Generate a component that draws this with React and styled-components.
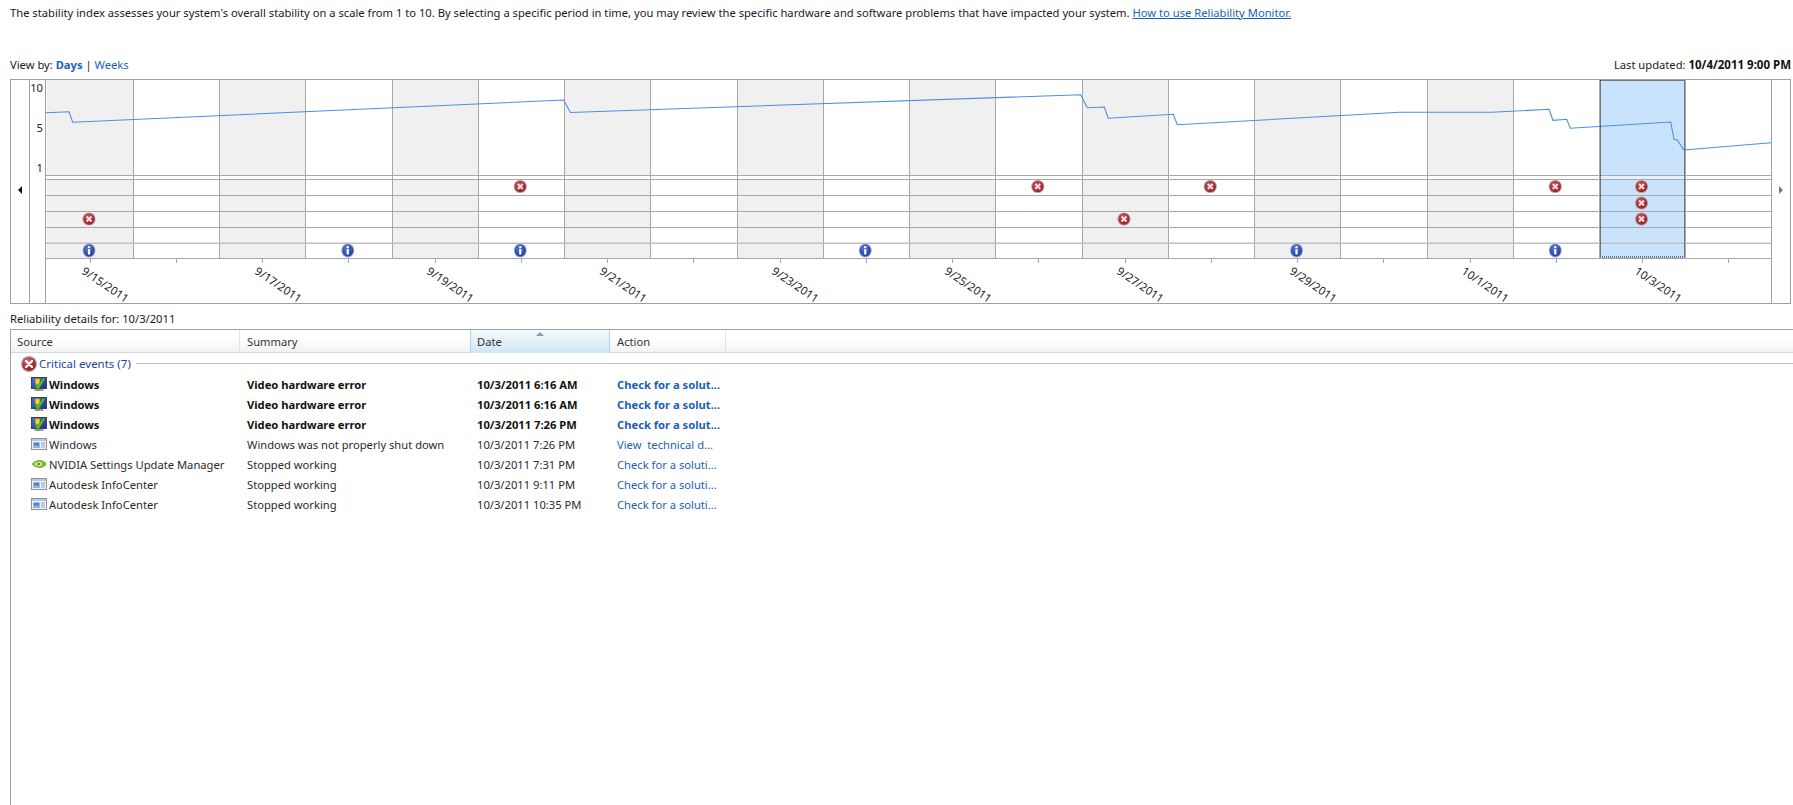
import React from "react";
import styled, { createGlobalStyle } from "styled-components";

const Global = createGlobalStyle`
  html, body { margin: 0; padding: 0; background: #fff; }
  body {
    font-family: "Noto Sans", "Open Sans", "Liberation Sans", sans-serif;
    font-size: 11.2px;
    color: #1a1a1a;
    overflow: hidden;
  }
`;

const Page = styled.div`
  width: 1793px;
  height: 805px;
  display: flex;
  flex-direction: column;
  overflow: hidden;
`;

const Top = styled.div`
  padding: 5px 2px 0 10px;
  display: flex;
  flex-direction: column;
`;

const Line = styled.div`
  line-height: 16px;
  height: 16px;
  white-space: nowrap;
`;

const Link = styled.a`
  color: #1a5fb4;
  text-decoration: ${(p) => (p.$underline ? "underline" : "none")};
  font-weight: ${(p) => (p.$bold ? 700 : 400)};
`;

const ViewBar = styled.div`
  margin-top: 36px;
  height: 16px;
  line-height: 16px;
  display: flex;
  justify-content: space-between;
  white-space: nowrap;
`;

const Strong = styled.b`
  font-weight: 700;
  color: #111;
  font-size: 11.5px;
`;

const ChartPanel = styled.div`
  margin-top: 6px;
  height: 223px;
  border: 1px solid #a0a0a0;
  display: flex;
`;

const ArrowColumn = styled.div`
  width: 18px;
  ${(p) => (p.$side === "left" ? "border-right" : "border-left")}: 1px solid #a0a0a0;
  display: flex;
  justify-content: center;
  padding-top: 106px;
`;

const Arrow = styled.span`
  width: 0;
  height: 0;
  border-top: 4px solid transparent;
  border-bottom: 4px solid transparent;
  ${(p) =>
    p.$dir === "left"
      ? "border-right: 4px solid #111;"
      : "border-left: 4px solid #777;"}
`;

const Axis = styled.div`
  width: 13px;
  padding-right: 2px;
  border-right: 1px solid #a0a0a0;
  display: flex;
  flex-direction: column;
  align-items: flex-end;
  gap: 24px;
`;

const AxisLabel = styled.span`
  height: 16px;
  line-height: 16px;
  color: #222;
`;

const PlotColumn = styled.div`
  width: 1725px;
  flex: none;
  display: flex;
  flex-direction: column;
`;

const ChartSvg = styled.svg`
  display: block;
  width: 1725px;
  height: 183px;
  flex: none;
`;

const DateAxis = styled.div`
  height: 40px;
  display: grid;
  grid-template-columns: repeat(10, 1fr);
`;

const DateCell = styled.div`
  position: relative;
  overflow: visible;
`;

const DateLabel = styled.span`
  position: absolute;
  left: 41px;
  top: 1px;
  line-height: 14px;
  white-space: nowrap;
  color: #222;
  font-size: 11.25px;
  transform: rotate(34deg);
  transform-origin: 0 0;
`;

const DetailsLabel = styled(Line)`
  margin-top: 7px;
`;

const Table = styled.div`
  margin: 2px 0 0 10px;
  flex: 1;
  border-top: 1px solid #a0a0a0;
  border-left: 1px solid #a0a0a0;
`;

const columns = "229px 231px 139px 116px 1fr";

const HeaderRow = styled.div`
  display: grid;
  grid-template-columns: ${columns};
  height: 22px;
  border-bottom: 1px solid #d5d6de;
  background: linear-gradient(#fff 0%, #fff 40%, #f1f2f4 100%);
`;

const HeaderCell = styled.div`
  position: relative;
  padding-left: ${(p) => p.$pad}px;
  line-height: 23px;
  color: #333;
  border-right: 1px solid ${(p) => (p.$sorted ? "#a9d3e8" : "#e2e3e7")};
  ${(p) =>
    p.$sorted &&
    `background: linear-gradient(#f4fafd 0%, #e6f2f9 45%, #cfe6f3 100%);
     border-left: 1px solid #a9d3e8;
     margin-left: -1px;`}
`;

const HeaderFiller = styled.div``;

const SortMark = styled.span`
  position: absolute;
  top: 2px;
  left: 65px;
  width: 0;
  height: 0;
  border-left: 4px solid transparent;
  border-right: 4px solid transparent;
  border-bottom: 4px solid #8a9ba8;
`;

const Group = styled.div`
  height: 21px;
  display: flex;
  align-items: center;
  padding-left: 10px;
  gap: 2px;
`;

const GroupTitle = styled.span`
  color: #1c47a0;
  font-size: 11.5px;
`;

const GroupRule = styled.span`
  flex: 1;
  height: 1px;
  margin-left: 3px;
  background: #b9c2d4;
`;

const Row = styled.div`
  display: grid;
  grid-template-columns: ${columns};
  height: 20px;
  align-items: center;
  font-weight: ${(p) => (p.$bold ? 700 : 400)};
  color: ${(p) => (p.$bold ? "#111" : "#2a2a2a")};
`;

const SourceCell = styled.div`
  padding-left: 20px;
  display: flex;
  align-items: center;
  gap: 2px;
  white-space: nowrap;
`;

const Cell = styled.div`
  padding-left: ${(p) => p.$pad}px;
  white-space: nowrap;
`;

const ActionCell = styled(Cell)`
  color: #1a5fb4;
`;

const IconSvg = styled.svg`
  display: block;
  flex: none;
  width: 16px;
  height: 16px;
`;

/* icons */
const MonitorIcon = () => (
  <IconSvg viewBox="0 0 16 16">
    <defs>
      <linearGradient id="scr" x1="0" y1="0" x2="1" y2="1">
        <stop offset="0" stopColor="#4a70dc" />
        <stop offset="1" stopColor="#1e2f8a" />
      </linearGradient>
    </defs>
    <rect x=".5" y="1.5" width="15" height="11" fill="url(#scr)" stroke="#39415c" strokeWidth="1" />
    <rect x="3.5" y="13" width="9" height="2" fill="#9aa0aa" />
    <path d="M4.2 2.8 L8.8 2.8 L8.8 7 Q8.8 9 6.5 10 Q4.2 9 4.2 7 Z" fill="#f2d422" stroke="#a08a10" strokeWidth=".4" />
    <path d="M3.6 8.6 L6.8 14.4 L14.2 2.6 L11.4 2.6 L6.9 10 L5.8 7.8 Z" fill="#5cc030" stroke="#2e7d14" strokeWidth=".5" />
  </IconSvg>
);

const WindowIcon = () => (
  <IconSvg viewBox="0 0 16 16">
    <rect x=".5" y="2.5" width="15" height="11" fill="#eef1f6" stroke="#8b93a3" />
    <rect x="1" y="3" width="14" height="2" fill="#b9c8de" />
    <rect x="2.5" y="6.5" width="6" height="5.5" fill="#4c82c8" />
    <rect x="2.5" y="9.5" width="6" height="2.5" fill="#8db4e2" />
    <path d="M10 7h4M10 9h4M10 11h4" stroke="#9aa2b0" strokeWidth="1" />
  </IconSvg>
);

const NvidiaIcon = () => (
  <IconSvg viewBox="0 0 16 16">
    <path d="M.5 8 C3 5 6.5 3.8 9.5 4.1 C12.5 4.4 14.5 6 15.5 8 C14.5 10 12.5 11.6 9.5 11.9 C6.5 12.2 3 11 .5 8 Z" fill="#78b82a" />
    <path d="M3 8 C4.6 6.2 7.6 5.4 9.8 6.1 C12 7 11.8 9.4 9.4 10.3 C7 10.7 4.6 9.8 3 8 Z" fill="#c8e69c" />
    <path d="M5.6 8 C6.6 7.1 8.2 6.8 9 7.5 C9.6 8.2 8.8 9.2 7.6 9.3 C6.8 9.1 6.1 8.6 5.6 8 Z" fill="#5c9620" />
  </IconSvg>
);

const CriticalIcon = () => (
  <IconSvg viewBox="0 0 16 16">
    <defs>
      <radialGradient id="crit" cx=".4" cy=".3" r=".8">
        <stop offset="0" stopColor="#d86a6e" />
        <stop offset=".6" stopColor="#ab2a30" />
        <stop offset="1" stopColor="#861418" />
      </radialGradient>
    </defs>
    <circle cx="8" cy="8" r="8" fill="#aca4a6" />
    <circle cx="8" cy="8" r="6.8" fill="url(#crit)" />
    <path d="M5 5 L11 11 M11 5 L5 11" stroke="#fff" strokeWidth="2.4" strokeLinecap="round" />
  </IconSvg>
);

/* chart data, in page coordinates */
const X0 = 46.5;
const DAY = 86.25;
const TOP = 80;
const HEAD_BOTTOM = 175.5;
const BAND_BOTTOM = 179.5;
const RULES = [195.5, 211.5, 227.5];
const INFO_RULE = 243;
const PLOT_BOTTOM = 258.5;
const COUNT = 20;
const SELECTED = 18;
const colX = (i) => Math.round(X0 + DAY * i);
const colMid = (i) => X0 + DAY * (i + 0.5);
const ROW_Y = [186.5, 203, 219];
const INFO_Y = 250.5;

const ERRORS = [
  [5, 0], [11, 0], [13, 0], [17, 0], [18, 0],
  [18, 1],
  [0, 2], [12, 2], [18, 2],
];
const INFOS = [0, 3, 5, 9, 14, 17];
const DATES = ["9/15/2011", "9/17/2011", "9/19/2011", "9/21/2011", "9/23/2011", "9/25/2011", "9/27/2011", "9/29/2011", "10/1/2011", "10/3/2011"];

const TREND = [
  [46, 112.7], [69, 111.7], [72.7, 122.3], [563.5, 100], [570.5, 112.5],
  [1080.7, 94.7], [1087.3, 107.7], [1104.3, 107], [1108.3, 118.3],
  [1173.3, 114.3], [1177.3, 124.7], [1400, 112.3], [1491.7, 112.3],
  [1549, 109.3], [1553, 120.3], [1566.7, 119.3], [1570.3, 128.3],
  [1670.7, 122], [1674, 139.3], [1677.3, 140], [1683.3, 149.3], [1686.7, 149.7], [1771, 142.7],
];

const ErrorGlyph = ({ x, y }) => (
  <g transform={`translate(${x} ${y})`}>
    <circle r="6.6" fill="#c4a2a4" />
    <circle r="5.7" fill="url(#errFill)" />
    <path d="M-2.5 -2.5 L2.5 2.5 M2.5 -2.5 L-2.5 2.5" stroke="#f4e2e2" strokeWidth="2" />
  </g>
);

const InfoGlyph = ({ x, y }) => (
  <g transform={`translate(${x} ${y})`}>
    <ellipse rx="6.4" ry="7" fill="#8fa4d4" />
    <ellipse rx="5.5" ry="6.1" fill="url(#infoFill)" />
    <rect x="-1.1" y="-1.4" width="2.2" height="5.4" fill="#fff" />
    <rect x="-1.1" y="-4.4" width="2.2" height="2" fill="#fff" />
  </g>
);

const Chart = () => (
  <ChartSvg viewBox={`46 ${TOP} 1725 183`}>
    <defs>
      <radialGradient id="errFill" cx=".4" cy=".3" r=".8">
        <stop offset="0" stopColor="#c85258" />
        <stop offset="1" stopColor="#8c1c24" />
      </radialGradient>
      <radialGradient id="infoFill" cx=".4" cy=".3" r=".8">
        <stop offset="0" stopColor="#5478d0" />
        <stop offset="1" stopColor="#1c3690" />
      </radialGradient>
    </defs>
    {Array.from({ length: COUNT }, (_, i) =>
      i % 2 === 0 && i <= 16 ? (
        <rect key={i} x={colX(i)} y={TOP} width={DAY} height={PLOT_BOTTOM - TOP} fill="#f0f0f0" />
      ) : null
    )}
    <rect x={colX(SELECTED) + 1} y={TOP} width={DAY - 1} height={PLOT_BOTTOM - TOP} fill="#c9e3fc" />
    <rect x="46" y={HEAD_BOTTOM} width="1725" height={BAND_BOTTOM - HEAD_BOTTOM} fill="#fff" />
    <rect x={colX(SELECTED) + 1} y={HEAD_BOTTOM} width="85" height={BAND_BOTTOM - HEAD_BOTTOM} fill="#e6f1fd" />
    {Array.from({ length: COUNT - 1 }, (_, i) => (
      <rect key={i} x={colX(i + 1)} y={TOP} width="1" height={PLOT_BOTTOM - TOP} fill="#a8a8a8" />
    ))}
    {[HEAD_BOTTOM, BAND_BOTTOM, ...RULES, PLOT_BOTTOM].map((y) => (
      <rect key={y} x="46" y={y - 0.5} width="1725" height="1" fill="#a8a8a8" />
    ))}
    <rect x="46" y={INFO_RULE - 0.5} width="1725" height="1.5" fill="#c0c0c0" />
    {Array.from({ length: COUNT }, (_, i) => (
      <rect key={i} x={Math.round(colMid(i))} y={PLOT_BOTTOM} width="1" height="4.5" fill="#a8a8a8" />
    ))}
    <polyline
      points={TREND.map((p) => p.join(",")).join(" ")}
      fill="none"
      stroke="#4a90e2"
      strokeWidth="1.1"
    />
    <rect
      x={colX(SELECTED) + 1.5}
      y={TOP + 0.5}
      width="84"
      height={PLOT_BOTTOM - TOP - 2}
      fill="none"
      stroke="#111"
      strokeWidth="1"
      strokeDasharray="1 1"
    />
    {ERRORS.map(([c, r]) => (
      <ErrorGlyph key={`${c}-${r}`} x={colMid(c) - 0.6} y={ROW_Y[r]} />
    ))}
    {INFOS.map((c) => (
      <InfoGlyph key={c} x={colMid(c) - 0.6} y={INFO_Y} />
    ))}
  </ChartSvg>
);

const EVENTS = [
  { icon: MonitorIcon, source: "Windows", summary: "Video hardware error", date: "10/3/2011 6:16 AM", action: "Check for a solut...", bold: true },
  { icon: MonitorIcon, source: "Windows", summary: "Video hardware error", date: "10/3/2011 6:16 AM", action: "Check for a solut...", bold: true },
  { icon: MonitorIcon, source: "Windows", summary: "Video hardware error", date: "10/3/2011 7:26 PM", action: "Check for a solut...", bold: true },
  { icon: WindowIcon, source: "Windows", summary: "Windows was not properly shut down", date: "10/3/2011 7:26 PM", action: "View\u00a0 technical d..." },
  { icon: NvidiaIcon, source: "NVIDIA Settings Update Manager", summary: "Stopped working", date: "10/3/2011 7:31 PM", action: "Check for a soluti..." },
  { icon: WindowIcon, source: "Autodesk InfoCenter", summary: "Stopped working", date: "10/3/2011 9:11 PM", action: "Check for a soluti..." },
  { icon: WindowIcon, source: "Autodesk InfoCenter", summary: "Stopped working", date: "10/3/2011 10:35 PM", action: "Check for a soluti..." },
];

export default function App() {
  return (
    <Page>
      <Global />
      <Top>
        <Line>
          The stability index assesses your system's overall stability on a scale from 1 to 10. By selecting a specific period in time, you may review the specific hardware and software problems that have impacted your system.{" "}
          <Link $underline href="#">How to use Reliability Monitor.</Link>
        </Line>
        <ViewBar>
          <span>
            View by: <Link $bold href="#">Days</Link> | <Link href="#">Weeks</Link>
          </span>
          <span>
            Last updated: <Strong>10/4/2011 9:00 PM</Strong>
          </span>
        </ViewBar>
        <ChartPanel>
          <ArrowColumn $side="left"><Arrow $dir="left" /></ArrowColumn>
          <Axis>
            <AxisLabel>10</AxisLabel>
            <AxisLabel>5</AxisLabel>
            <AxisLabel>1</AxisLabel>
          </Axis>
          <PlotColumn>
            <Chart />
            <DateAxis>
              {DATES.map((d) => (
                <DateCell key={d}><DateLabel>{d}</DateLabel></DateCell>
              ))}
            </DateAxis>
          </PlotColumn>
          <ArrowColumn $side="right"><Arrow $dir="right" /></ArrowColumn>
        </ChartPanel>
        <DetailsLabel>Reliability details for: 10/3/2011</DetailsLabel>
      </Top>
      <Table>
        <HeaderRow>
          <HeaderCell $pad={6}>Source</HeaderCell>
          <HeaderCell $pad={7}>Summary</HeaderCell>
          <HeaderCell $pad={6} $sorted>Date<SortMark /></HeaderCell>
          <HeaderCell $pad={7}>Action</HeaderCell>
          <HeaderFiller />
        </HeaderRow>
        <Group>
          <CriticalIcon />
          <GroupTitle>Critical events (7)</GroupTitle>
          <GroupRule />
        </Group>
        {EVENTS.map((e, i) => {
          const Icon = e.icon;
          return (
            <Row key={i} $bold={e.bold}>
              <SourceCell><Icon />{e.source}</SourceCell>
              <Cell $pad={7}>{e.summary}</Cell>
              <Cell $pad={6}>{e.date}</Cell>
              <ActionCell $pad={7}>{e.action}</ActionCell>
            </Row>
          );
        })}
      </Table>
    </Page>
  );
}
